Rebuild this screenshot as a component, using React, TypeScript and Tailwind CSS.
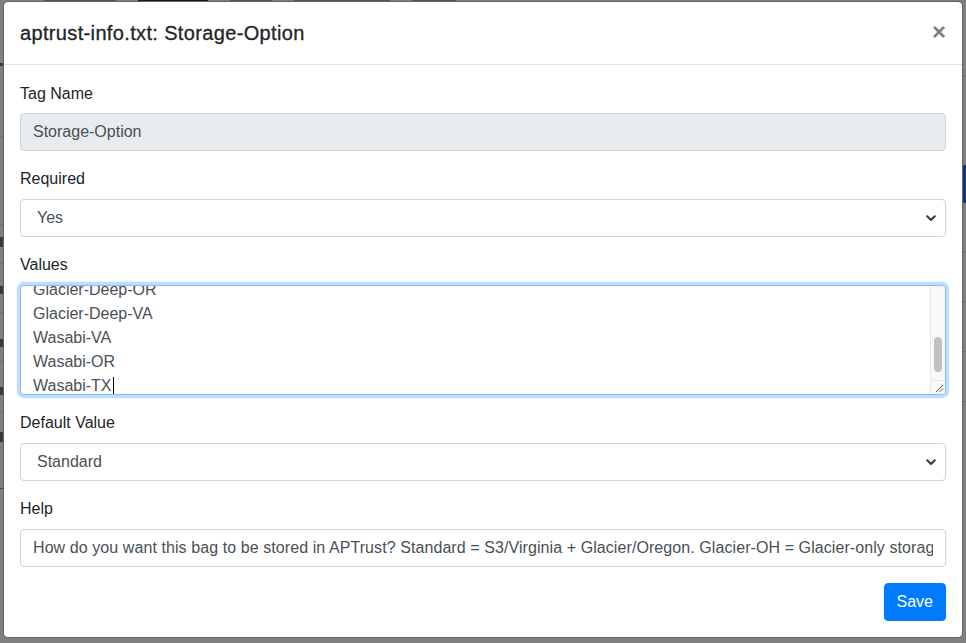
import React from "react";

function Chevron() {
  return (
    <svg width="10" height="7" viewBox="0 0 10 7" className="shrink-0">
      <path d="M1.2 1.3 L5 5 L8.8 1.3" fill="none" stroke="#343a40" strokeWidth="2" strokeLinecap="round" strokeLinejoin="round" />
    </svg>
  );
}

function Label({ children }: { children: React.ReactNode }) {
  return <div className="mb-2 text-[16px] leading-6 text-[#212529]">{children}</div>;
}

function SelectBox({ value }: { value: string }) {
  return (
    <div className="flex h-[38px] items-center justify-between rounded-[4px] border border-[#ced4da] bg-white pl-[16px] pr-[9px] text-[16px] text-[#495057]">
      <span>{value}</span>
      <Chevron />
    </div>
  );
}

function EdgeStrip({ marks }: { marks: { h: number; c: string }[] }) {
  return (
    <div className="flex w-[3px] shrink-0 flex-col">
      {marks.map((m, i) => (
        <div key={i} style={{ height: m.h, backgroundColor: m.c }} />
      ))}
    </div>
  );
}

const G = "transparent";
const L = "#6e6e6e";
const D = "#3a3a3a";

export default function App() {
  const values = ["Glacier-Deep-OR", "Glacier-Deep-VA", "Wasabi-VA", "Wasabi-OR", "Wasabi-TX"];
  const leftMarks = [
    { h: 62, c: G }, { h: 3, c: D }, { h: 70, c: G }, { h: 1, c: L }, { h: 87, c: G }, { h: 1, c: L },
    { h: 12, c: G }, { h: 10, c: D }, { h: 16, c: G }, { h: 1, c: L }, { h: 22, c: G }, { h: 8, c: D },
    { h: 18, c: G }, { h: 1, c: L }, { h: 26, c: G }, { h: 8, c: D }, { h: 14, c: G }, { h: 1, c: L },
    { h: 25, c: G }, { h: 8, c: D }, { h: 16, c: G }, { h: 1, c: L }, { h: 20, c: G }, { h: 10, c: D },
    { h: 46, c: G }, { h: 1, c: "#1f5a2a" },
  ];
  const rightMarks = [
    { h: 75, c: G }, { h: 1, c: L }, { h: 88, c: G }, { h: 38, c: "#0b3a7c" }, { h: 48, c: G },
    { h: 1, c: L }, { h: 49, c: G }, { h: 1, c: L }, { h: 49, c: G }, { h: 1, c: L }, { h: 49, c: G }, { h: 1, c: L },
  ];
  return (
    <div
      className="flex h-[643px] w-full flex-col overflow-hidden bg-[#7f7f7f]"
      style={{ fontFamily: '"Liberation Sans", Arial, sans-serif' }}
    >
      {/* dimmed navigation of the page behind, barely visible above the modal */}
      <div className="flex h-[1px] shrink-0 items-start gap-[22px] pl-[44px]">
        <div className="h-[1px] w-[72px] bg-[#555]" />
        <div className="h-[1px] w-[70px] bg-[#1a1a1a]" />
        <div className="h-[1px] w-[42px] bg-[#555]" />
        <div className="h-[1px] w-[96px] bg-[#555]" />
        <div className="h-[1px] w-[44px] bg-[#555]" />
      </div>

      <div className="flex flex-1">
        <EdgeStrip marks={leftMarks} />

        {/* modal */}
        <div className="min-w-0 flex-1">
          <div className="rounded-[5px] border border-[rgba(0,0,0,0.2)] bg-white bg-clip-padding">
            <div className="flex items-start justify-between border-b border-[#dee2e6] p-4">
              <h5 className="text-[20px] font-normal leading-[30px] tracking-[0.35px] text-[#212529] [-webkit-text-stroke:0.3px_#212529]">
                aptrust-info.txt: Storage-Option
              </h5>
              <button className="-m-4 ml-auto p-4 pt-[18px] text-[24px] font-bold leading-6 text-black opacity-50">
                ×
              </button>
            </div>

            <div className="px-4 pb-4 pt-[17px]">
              <div className="mb-4">
                <Label>Tag Name</Label>
                <div className="-mt-px flex h-[38px] items-center rounded-[4px] border border-[#ced4da] bg-[#e9ecef] px-3 text-[16px] text-[#495057]">
                  Storage-Option
                </div>
              </div>

              <div className="mb-4">
                <Label>Required</Label>
                <SelectBox value="Yes" />
              </div>

              <div className="mb-4">
                <Label>Values</Label>
                <div className="flex h-[110px] overflow-hidden rounded-[4px] border border-[#80bdff] bg-white shadow-[0_0_0_3.2px_rgba(0,123,255,0.25)]">
                  <div className="min-w-0 flex-1 overflow-hidden px-3">
                    <div className="-mt-[8px] text-[16px] leading-6 text-[#495057]">
                      {values.map((v, i) => (
                        <div key={v} className="flex items-center">
                          <span>{v}</span>
                          {i === values.length - 1 && <span className="ml-px inline-block h-[19px] w-px bg-black" />}
                        </div>
                      ))}
                    </div>
                  </div>
                  <div className="flex w-[15px] flex-col border-l border-[#e8e8e8] bg-[#f8f8f8]">
                    <div className="flex-1 pt-[51px]">
                      <div className="mx-auto h-[35px] w-[8px] rounded-full bg-[#c1c1c1]" />
                    </div>
                    <div className="flex h-[14px] items-end justify-end border-t border-[#e8e8e8] pb-[1px] pr-[1px]">
                      <svg width="10" height="10" viewBox="0 0 10 10">
                        <path d="M9 2 L2 9 M9 5.5 L5.5 9" stroke="#555" strokeWidth="1" />
                      </svg>
                    </div>
                  </div>
                </div>
              </div>

              <div className="mb-4">
                <Label>Default Value</Label>
                <SelectBox value="Standard" />
              </div>

              <div className="mb-4">
                <Label>Help</Label>
                <div className="flex h-[38px] items-center rounded-[4px] border border-[#ced4da] bg-white px-3 text-[16px] text-[#495057]">
                  <div className="min-w-0 flex-1 overflow-hidden whitespace-nowrap tracking-[0.08px]">
                    How do you want this bag to be stored in APTrust? Standard = S3/Virginia + Glacier/Oregon. Glacier-OH = Glacier-only storage in Ohio. Glacier-OR = Glacier-only storage in Oregon.
                  </div>
                </div>
              </div>

              <div className="flex justify-end">
                <button className="h-[38px] rounded-[4px] border border-[#007bff] bg-[#007bff] px-3 text-[16px] leading-6 text-white">
                  Save
                </button>
              </div>
            </div>
          </div>
        </div>

        <EdgeStrip marks={rightMarks} />
      </div>
    </div>
  );
}
